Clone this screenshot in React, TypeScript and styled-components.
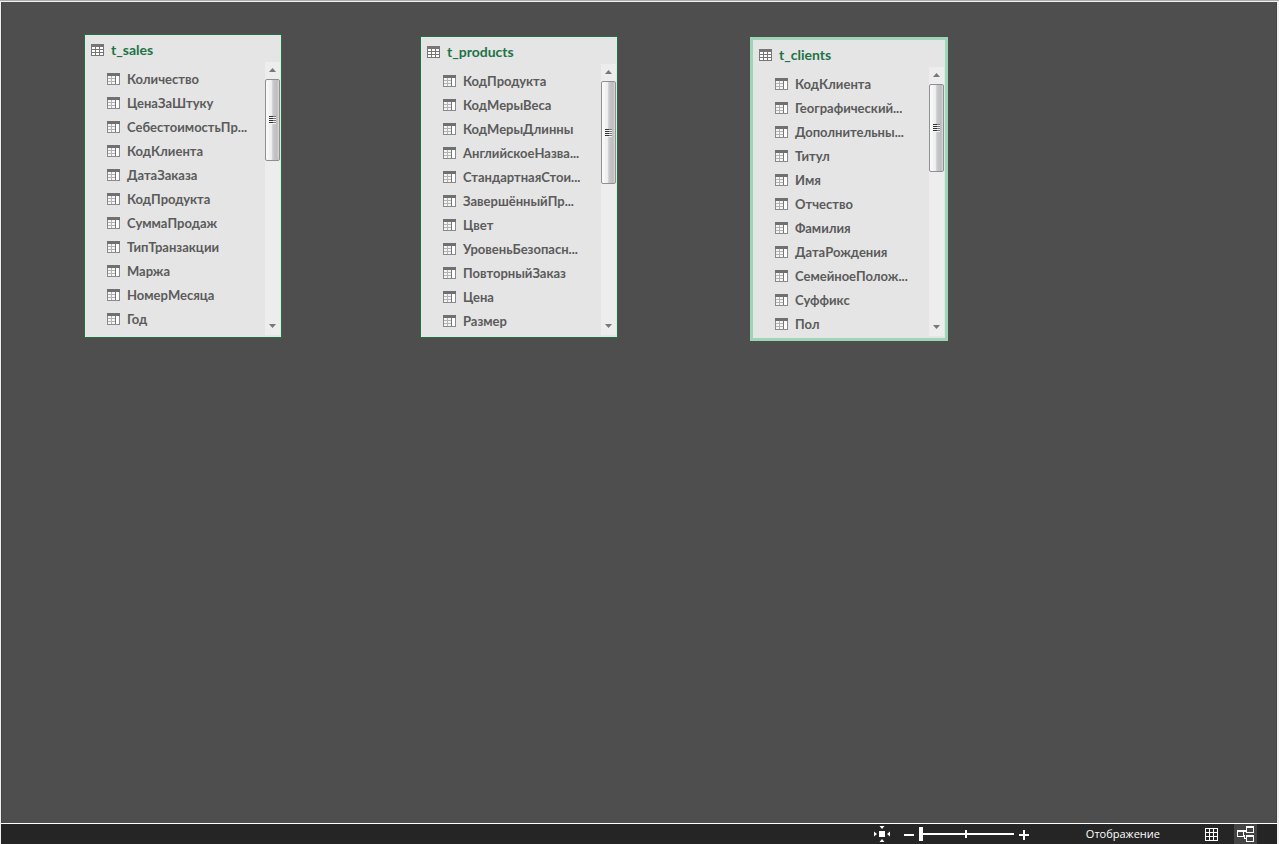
import React from "react";
import styled, { createGlobalStyle, css } from "styled-components";

const GlobalStyle = createGlobalStyle`
  *, *::before, *::after { box-sizing: border-box; }
  body {
    margin: 0;
    background: #f0f0f0;
    font-family: "Open Sans", "Noto Sans", sans-serif;
  }
`;

const Window = styled.main`
  display: flex;
  flex-direction: column;
  min-height: 100vh;
  padding: 1px 2px 0 1px;
  border-top: 1px solid #acacac;
`;

const Canvas = styled.section`
  position: relative;
  flex: 1;
  min-height: 400px;
  background: #4e4e4e;
  border: solid #464646;
  border-width: 0 1px;
`;

const Card = styled.article<{ $x: number; $y: number; $height: number; $selected?: boolean }>`
  position: absolute;
  left: ${(p) => p.$x}px;
  top: ${(p) => p.$y}px;
  display: flex;
  flex-direction: column;
  width: 198px;
  height: ${(p) => p.$height}px;
  background: #e5e5e5;
  border: 1px solid #217346;
  padding-bottom: 2px;
  font-family: Lato, "Open Sans", sans-serif;
  ${(p) =>
    p.$selected &&
    css`
      border: 3px solid #9fd5b7;
    `}
`;

const CardHeader = styled.header`
  display: flex;
  align-items: center;
  gap: 7px;
  height: 27px;
  padding: 2px 0 0 6px;
`;

const CardTitle = styled.h2`
  margin: 0;
  font-size: 14px;
  line-height: 18px;
  font-weight: 700;
  color: #217346;
`;

const CardBody = styled.div`
  display: flex;
  flex: 1;
  justify-content: space-between;
`;

const FieldList = styled.ul`
  flex: 1;
  min-width: 0;
  margin: 0;
  padding: 5px 0 0 22px;
  list-style: none;
`;

const Field = styled.li`
  display: flex;
  align-items: center;
  gap: 7px;
  height: 24px;
  font-size: 13px;
  line-height: 18px;
  font-weight: 700;
  white-space: nowrap;
  color: #5b5b5b;
`;

const ScrollTrack = styled.div`
  display: flex;
  flex-direction: column;
  width: 15px;
  margin-right: 1px;
  background: #ededed;
`;

const ScrollButton = styled.button`
  display: grid;
  place-items: center;
  height: 17px;
  padding: 0 0 2px;
  border: 0;
  background: transparent;
  flex: none;
`;

const ScrollSpace = styled.div`
  flex: 1;
`;

const ScrollThumb = styled.div<{ $height: number }>`
  display: grid;
  place-items: center;
  height: ${(p) => p.$height}px;
  border: 1px solid #8f8f8f;
  border-radius: 2px;
  background: linear-gradient(90deg, #fbfbfb 0%, #ececec 45%, #c9cacc 52%, #bcbdc0 85%, #dcdcdc 100%);
`;

const StatusBar = styled.footer`
  display: flex;
  align-items: center;
  justify-content: flex-end;
  height: 21px;
  padding-right: 20px;
  border-top: 1px solid #ffffff;
  background: #252525;
  color: #ffffff;
`;

const BarButton = styled.button<{ $active?: boolean; $width: number }>`
  display: grid;
  place-items: center;
  width: ${(p) => p.$width}px;
  height: 20px;
  padding: 0;
  border: 0;
  color: #ffffff;
  background: ${(p) => (p.$active ? "#444444" : "transparent")};
`;

const ZoomGroup = styled.div`
  display: flex;
  align-items: center;
  margin: 0 52px 0 7px;
`;

const ZoomSlider = styled.input`
  appearance: none;
  width: 95px;
  height: 20px;
  margin: 0;
  background:
    linear-gradient(#fff, #fff) 46px 6px / 2px 8px no-repeat,
    linear-gradient(#fff, #fff) 0 9px / 100% 2px no-repeat;
  &::-webkit-slider-thumb {
    appearance: none;
    width: 4px;
    height: 14px;
    border: 0;
    border-radius: 0;
    background: #ffffff;
  }
`;

const ViewLabel = styled.span`
  margin-right: 40px;
  font-size: 11px;
  line-height: 18px;
`;

const ViewGroup = styled.div`
  display: flex;
  gap: 11px;
`;

const TableIcon = () => (
  <svg width="13" height="12" viewBox="0 0 13 12" shapeRendering="crispEdges" aria-hidden="true">
    <rect width="13" height="12" fill="#767676" />
    <path
      fill="#fff"
      d="M1 3h3v2H1zM5 3h3v2H5zM9 3h3v2H9zM1 6h3v2H1zM5 6h3v2H5zM9 6h3v2H9zM1 9h3v2H1zM5 9h3v2H5zM9 9h3v2H9z"
    />
  </svg>
);

const ColumnIcon = () => (
  <svg width="13" height="12" viewBox="0 0 13 12" shapeRendering="crispEdges" aria-hidden="true">
    <rect width="13" height="12" fill="#8a8a8a" />
    <rect width="13" height="3" fill="#707070" />
    <path fill="#b4b4b4" d="M1 3h8v8H1z" />
    <path fill="#f4f4f4" d="M1 3h3v2H1zM5 3h3v2H5zM1 6h3v2H1zM5 6h3v2H5zM1 9h3v2H1zM5 9h3v2H5z" />
    <path fill="#fff" d="M9 3h3v8H9z" />
    <path fill="#777" d="M8 3h1v8H8z" />
  </svg>
);

const Grip = () => (
  <svg width="7" height="8" viewBox="0 0 7 8" shapeRendering="crispEdges" aria-hidden="true">
    <path fill="#333" d="M0 0h4v1H0zM0 2h4v1H0zM0 4h4v1H0zM0 6h4v1H0z" />
    <path fill="#777" d="M4 0h3v1H4zM4 2h3v1H4zM4 4h3v1H4zM4 6h3v1H4z" />
    <path fill="#f5f5f5" d="M0 1h7v1H0zM0 3h7v1H0zM0 5h7v1H0zM0 7h7v1H0z" />
  </svg>
);

const Arrow = ({ down }: { down?: boolean }) => (
  <svg width="7" height="4" viewBox="0 0 7 4" aria-hidden="true">
    <path fill="#777" d={down ? "M0 0h7L3.5 4z" : "M0 4h7L3.5 0z"} />
  </svg>
);

const FitIcon = () => (
  <svg width="16" height="16" viewBox="0 0 16 16" fill="#fff" aria-hidden="true">
    <path d="M5 5h6v6H5zM5.500 0h5L8 3zM5.500 16h5L8 13zM0 5.500v5L3 8zM16 5.500v5L13 8z" />
  </svg>
);

const GridIcon = () => (
  <svg width="13" height="13" viewBox="0 0 13 13" shapeRendering="crispEdges" aria-hidden="true">
    <path
      fill="#fff"
      fillRule="evenodd"
      d="M0 0h13v13H0zM1 1v3h3V1zM5 1v3h3V1zM9 1v3h3V1zM1 5v3h3V5zM5 5v3h3V5zM9 5v3h3V5zM1 9v3h3V9zM5 9v3h3V9zM9 9v3h3V9z"
    />
  </svg>
);

const DiagramIcon = () => (
  <svg width="17" height="16" viewBox="0 0 17 16" shapeRendering="crispEdges" aria-hidden="true">
    <path
      fill="#fff"
      fillRule="evenodd"
      d="M0 4h7v7H0zM1 6v4h5V6zM9 0h8v7H9zM10 2v4h6V2zM9 9h8v7H9zM10 11v4h6v-4zM7 4h2v2H7zM7 9h1v3h1v1H7z"
    />
  </svg>
);

const MinusIcon = () => (
  <svg width="10" height="10" viewBox="0 0 10 10" fill="#fff" aria-hidden="true">
    <path d="M0 5h10v2H0z" />
  </svg>
);

const PlusIcon = () => (
  <svg width="10" height="12" viewBox="0 0 10 12" fill="#fff" aria-hidden="true">
    <path d="M4 2h2v4h4v2H6v4H4V8H0V6h4z" />
  </svg>
);

type TableData = {
  name: string;
  x: number;
  y: number;
  height: number;
  thumb: number;
  selected?: boolean;
  fields: string[];
};

const tables: TableData[] = [
  {
    name: "t_sales",
    x: 82,
    y: 32,
    height: 304,
    thumb: 82,
    fields: [
      "Количество", "ЦенаЗаШтуку", "СебестоимостьПр...", "КодКлиента", "ДатаЗаказа", "КодПродукта",
      "СуммаПродаж", "ТипТранзакции", "Маржа", "НомерМесяца", "Год",
    ],
  },
  {
    name: "t_products",
    x: 418,
    y: 34,
    height: 302,
    thumb: 103,
    fields: [
      "КодПродукта", "КодМерыВеса", "КодМерыДлинны", "АнглийскоеНазва...", "СтандартнаяСтои...", "ЗавершённыйПр...",
      "Цвет", "УровеньБезопасн...", "ПовторныйЗаказ", "Цена", "Размер",
    ],
  },
  {
    name: "t_clients",
    x: 748,
    y: 35,
    height: 304,
    thumb: 88,
    selected: true,
    fields: [
      "КодКлиента", "Географический...", "Дополнительны...", "Титул", "Имя", "Отчество",
      "Фамилия", "ДатаРождения", "СемейноеПолож...", "Суффикс", "Пол",
    ],
  },
];

const TableCard = ({ table }: { table: TableData }) => (
  <Card $x={table.x} $y={table.y} $height={table.height} $selected={table.selected}>
    <CardHeader>
      <TableIcon />
      <CardTitle>{table.name}</CardTitle>
    </CardHeader>
    <CardBody>
      <FieldList>
        {table.fields.map((field) => (
          <Field key={field}>
            <ColumnIcon />
            {field}
          </Field>
        ))}
      </FieldList>
      <ScrollTrack>
        <ScrollButton type="button" aria-label="Вверх">
          <Arrow />
        </ScrollButton>
        <ScrollThumb $height={table.thumb}>
          <Grip />
        </ScrollThumb>
        <ScrollSpace />
        <ScrollButton type="button" aria-label="Вниз">
          <Arrow down />
        </ScrollButton>
      </ScrollTrack>
    </CardBody>
  </Card>
);

export default function App() {
  return (
    <>
      <GlobalStyle />
      <Window>
        <Canvas>
          {tables.map((table) => (
            <TableCard key={table.name} table={table} />
          ))}
        </Canvas>
        <StatusBar>
          <BarButton type="button" $width={20} aria-label="По размеру экрана">
            <FitIcon />
          </BarButton>
          <ZoomGroup>
            <BarButton type="button" $width={20} aria-label="Уменьшить">
              <MinusIcon />
            </BarButton>
            <ZoomSlider type="range" min={0} max={100} defaultValue={0} aria-label="Масштаб" />
            <BarButton type="button" $width={20} aria-label="Увеличить">
              <PlusIcon />
            </BarButton>
          </ZoomGroup>
          <ViewLabel>Отображение</ViewLabel>
          <ViewGroup>
            <BarButton type="button" $width={23} aria-label="Таблица">
              <GridIcon />
            </BarButton>
            <BarButton type="button" $width={23} $active aria-label="Диаграмма">
              <DiagramIcon />
            </BarButton>
          </ViewGroup>
        </StatusBar>
      </Window>
    </>
  );
}
